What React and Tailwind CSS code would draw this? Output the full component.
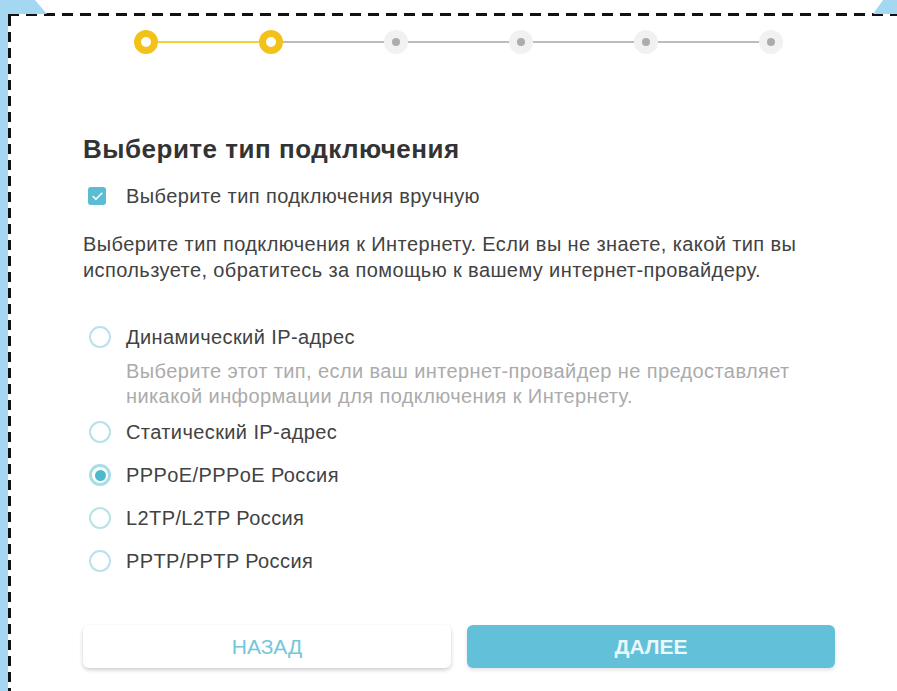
import { Check } from 'lucide-react';

const steps = ['done', 'done', 'todo', 'todo', 'todo', 'todo'];

const options = [
  {
    label: 'Динамический IP-адрес',
    hint: 'Выберите этот тип, если ваш интернет-провайдер не предоставляет никакой информации для подключения к Интернету.',
  },
  { label: 'Статический IP-адрес' },
  { label: 'PPPoE/PPPoE Россия', checked: true },
  { label: 'L2TP/L2TP Россия' },
  { label: 'PPTP/PPTP Россия' },
];

function StepDot({ done }) {
  if (done) {
    return <div className="w-[24px] h-[24px] shrink-0 rounded-full border-[7px] border-[#f2c21b] bg-white" />;
  }
  return (
    <div className="w-[24px] h-[24px] shrink-0 rounded-full bg-[#f1f1f1] flex items-center justify-center">
      <div className="w-[8px] h-[8px] rounded-full bg-[#acacac]" />
    </div>
  );
}

function Stepper() {
  return (
    <div className="flex items-center w-[649px] ml-[51px]">
      {steps.map((s, i) => (
        <div key={i} className={i === 0 ? 'flex items-center' : 'flex items-center flex-1'}>
          {i > 0 && (
            <div className={steps[i] === 'done' ? 'flex-1 h-[2px] bg-[#f4cf3f]' : 'flex-1 h-[2px] bg-[#bcbcbc]'} />
          )}
          <StepDot done={s === 'done'} />
        </div>
      ))}
    </div>
  );
}

function Radio({ checked }) {
  if (checked) {
    return (
      <span className="w-[22px] h-[22px] shrink-0 rounded-full border-[3px] border-[#a9dde6] flex items-center justify-center">
        <span className="w-[11px] h-[11px] rounded-full bg-[#4eb8cc]" />
      </span>
    );
  }
  return <span className="w-[22px] h-[22px] shrink-0 rounded-full border-2 border-[#b7e2e9] bg-white" />;
}

export default function App() {
  return (
    <div className="relative min-h-screen w-full bg-white flex overflow-hidden font-['Liberation_Sans',Arial,sans-serif]">
      {/* window frame bits behind the selection */}
      <div className="w-[8px] shrink-0 bg-[#a4d7f2]" />
      <div className="absolute left-0 top-0 w-[47px] h-[14px] bg-[#a4d7f2] [clip-path:polygon(0_0,35px_0,47px_14px,0_14px)]" />
      <div className="absolute right-0 top-0 w-[24px] h-[14px] bg-[#a4d7f2] [clip-path:polygon(10px_0,24px_0,24px_14px,0_14px)]" />

      {/* dashed selection: top and left edges */}
      <div className="flex-1 mt-[13px] flex flex-col">
        <div className="h-[3px] bg-white bg-[repeating-linear-gradient(90deg,#111_0_11px,transparent_11px_18px)]" />
        <div className="flex-1 flex">
          <div className="w-[3px] bg-[repeating-linear-gradient(180deg,#111_0_10px,transparent_10px_16px)]" />
          <div className="w-[752px] ml-[72px] pt-[14px] text-[#424242]">
            <Stepper />

            <h1 className="mt-[79px] text-[26px] leading-[32px] font-bold tracking-[0.5px] text-[#333]">Выберите тип подключения</h1>

            <label className="mt-[18px] ml-[5px] flex items-center gap-[20px]">
              <span className="w-[18px] h-[18px] rounded-[3px] bg-[#5bbdd1] flex items-center justify-center">
                <Check className="w-[13px] h-[13px] text-white" strokeWidth={3} />
              </span>
              <span className="text-[20px] leading-[26px] tracking-[0.4px]">Выберите тип подключения вручную</span>
            </label>

            <p className="mt-[22px] text-[20px] leading-[26px] tracking-[0.4px]">
              Выберите тип подключения к Интернету. Если вы не знаете, какой тип вы используете, обратитесь за помощью к вашему интернет-провайдеру.
            </p>

            <div className="mt-[41px] flex flex-col gap-[17px]">
              {options.map((o) => (
                <div key={o.label}>
                  <div className="ml-[6px] flex items-center gap-[15px]">
                    <Radio checked={o.checked} />
                    <span className="text-[20px] leading-[26px] tracking-[0.4px]">{o.label}</span>
                  </div>
                  {o.hint && (
                    <p className="mt-[9px] mb-[-7px] ml-[43px] text-[20px] leading-[25px] tracking-[0.4px] text-[#ababab]">{o.hint}</p>
                  )}
                </div>
              ))}
            </div>

            <div className="mt-[51px] flex gap-[16px]">
              <button className="flex-1 h-[43px] rounded-[6px] bg-white shadow-[0_2px_4px_rgba(0,0,0,0.2)] text-[21px] text-[#72c7d8]">
                НАЗАД
              </button>
              <button className="flex-1 h-[43px] rounded-[6px] bg-[#62c1d8] shadow-[0_2px_4px_rgba(0,0,0,0.12)] text-[21px] font-bold text-[#eaf7fb]">
                ДАЛЕЕ
              </button>
            </div>
          </div>
        </div>
      </div>
    </div>
  );
}
